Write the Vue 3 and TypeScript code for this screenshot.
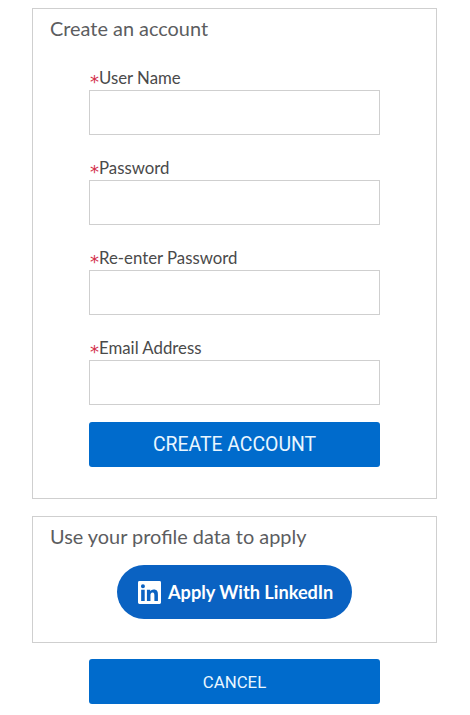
<script setup lang="ts">
const fields: string[] = ['User Name', 'Password', 'Re-enter Password', 'Email Address']
</script>

<template>
  <div class="page">
    <section class="panel account">
      <h2 class="title">Create an account</h2>
      <form class="form" @submit.prevent>
        <div v-for="f in fields" :key="f" class="field">
          <label class="label"><span class="star">*</span>{{ f }}</label>
          <input class="input" type="text" />
        </div>
        <button class="btn create" type="button">CREATE ACCOUNT</button>
      </form>
    </section>

    <section class="panel profile">
      <h2 class="title">Use your profile data to apply</h2>
      <button class="linkedin" type="button">
        <svg class="li" viewBox="0 0 24 24" width="23" height="23" aria-hidden="true">
          <path fill="#fff" d="M1.500 0h21A1.500 1.500 0 0 1 24 1.500v21a1.500 1.500 0 0 1-1.500 1.500h-21A1.500 1.500 0 0 1 0 22.500v-21A1.500 1.500 0 0 1 1.500 0z" />
          <path fill="#0a62c2" d="M3.300 9.200h3.700V20.800H3.300zM5.150 3.300a2.100 2.100 0 1 1 0 4.200 2.100 2.100 0 0 1 0-4.200zM9.300 9.200h3.500v1.600c.6-1 1.800-1.900 3.600-1.900 3.700 0 4.400 2.300 4.400 5.400v6.500h-3.700v-5.700c0-1.400-.1-3.100-1.900-3.100s-2.200 1.500-2.200 3v5.800H9.300z" />
        </svg>
        <span>Apply With LinkedIn</span>
      </button>
    </section>

    <button class="btn cancel" type="button">CANCEL</button>
  </div>
</template>

<style>
html, body { margin: 0; background: #fff; }
</style>

<style scoped>
.page {
  width: 470px;
  height: 715px;
  box-sizing: border-box;
  padding: 8px 33px 0 32px;
  font-family: Lato, "Open Sans", sans-serif;
  overflow: hidden;
  display: flex;
  flex-direction: column;
}
.panel {
  border: 1px solid #cfcfcf;
  box-sizing: border-box;
}
.account { height: 491px; padding: 7px 0 0 17px; }
.title {
  margin: 0;
  font: 400 19.9px/24px Lato, "Open Sans", sans-serif;
  color: #5c5d5f;
}
.form {
  width: 291px;
  margin: 27px 0 0 39px;
}
.field { margin-bottom: 22px; }
.field:nth-last-child(2) { margin-bottom: 17px; }
.label {
  display: block;
  height: 23px;
  font: 400 16.8px/21px Lato, sans-serif;
  color: #4a4a4a;
  white-space: nowrap;
}
.star {
  display: inline-block;
  width: 10px;
  font: 400 18px/21px "DejaVu Sans", sans-serif;
  color: #d32f4b;
  position: relative;
  top: 4px;
  left: 1px;
}
.input {
  display: block;
  width: 100%;
  height: 45px;
  box-sizing: border-box;
  border: 1px solid #cfcfcf;
  background: #fff;
  margin: 0;
  padding: 0 8px;
}
.btn {
  display: block;
  width: 291px;
  height: 45px;
  border: 0;
  border-radius: 3px;
  background: #006bcc;
  color: #e9f6ff;
  font-family: Roboto, "Liberation Sans", sans-serif;
  padding: 0;
}
.create { font-size: 19.4px; }
.profile {
  height: 127px;
  margin-top: 17px;
  padding: 7px 17px 0;
  display: flex;
  flex-direction: column;
}
.linkedin {
  align-self: center;
  width: 235px;
  height: 54px;
  margin: 17px 0 0 0;
  padding: 0 0 0 21px;
  border: 0;
  border-radius: 27px;
  background: #0a62c2;
  color: #fff;
  font: 700 18.2px/24px Lato, "Open Sans", sans-serif;
  display: flex;
  align-items: center;
  gap: 7px;
}
.li { flex: none; }
.cancel {
  font-size: 16.800px;
  margin: 16px 0 0 57px;
}
</style>
